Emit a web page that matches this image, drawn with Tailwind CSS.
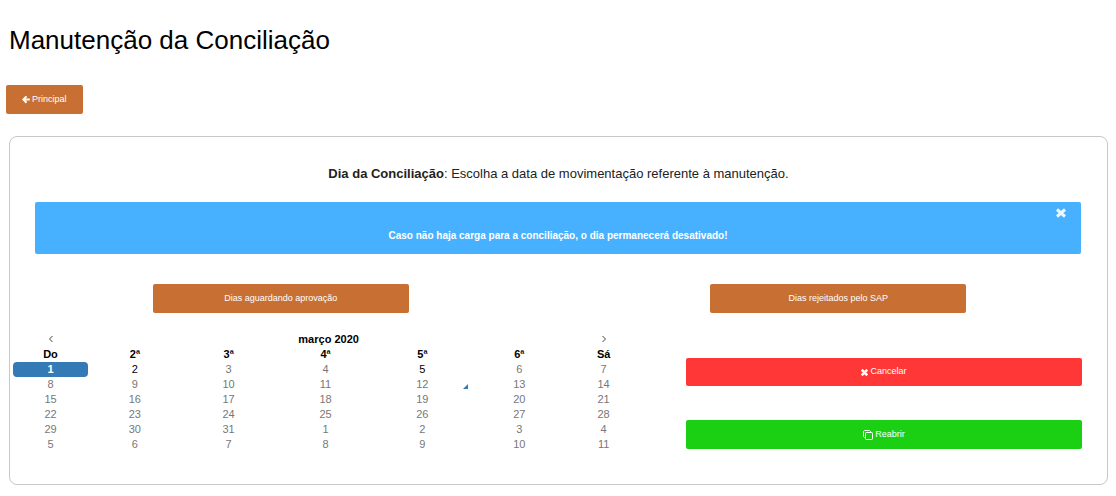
<!DOCTYPE html>
<html lang="pt-BR">
<head>
<meta charset="utf-8">
<meta name="viewport" content="width=device-width, initial-scale=1">
<title>Manutenção da Conciliação</title>
<script src="https://cdn.jsdelivr.net/npm/@tailwindcss/browser@4"></script>
</head>
<body class="bg-white font-['Liberation_Sans',Arial,sans-serif] text-black">
<main class="flex flex-col items-stretch pt-6 pr-2 pb-2">
  <h1 class="ml-[9px] text-[26px] leading-8">Manutenção da Conciliação</h1>
  <a href="#" class="mt-[29px] ml-1.5 flex h-[29px] items-center gap-0.5 self-start rounded-xs bg-[#c87033] px-4 text-[9px] text-white">
    <svg class="size-2" viewBox="0 0 16 16" fill="none" stroke="currentColor" stroke-width="3.6" aria-hidden="true"><path d="M15.5 7H3M9 .5L2.500 7L9 13.500"/></svg>
    Principal
  </a>
  <section class="mt-[22px] ml-[9px] rounded-lg border border-[#c8c8c8] pb-8">
    <p class="mt-7 text-center text-[13px] leading-[18px] text-[#222]"><strong>Dia da Conciliação</strong>: Escolha a data de movimentação referente à manutenção.</p>
    <div role="alert" class="relative mt-[19px] mr-[26px] ml-[25px] h-[52px] rounded-xs bg-[#47b1ff] pt-[26px] text-center text-[10px] leading-4 font-bold text-white">
      Caso não haja carga para a conciliação, o dia permanecerá desativado!
      <button type="button" aria-label="Fechar" class="absolute top-1.5 right-[15px] text-white/90">
        <svg class="size-2.5" viewBox="0 0 10 10" stroke="currentColor" stroke-width="3" aria-hidden="true"><path d="M1 1.500L9 8.500M9 1.500L1 8.500"/></svg>
      </button>
    </div>
    <div class="-mr-2.5 -ml-2 mt-[30px] grid grid-cols-2 justify-items-center text-[9px] text-white">
      <button type="button" class="h-[29px] w-[46%] rounded-xs bg-[#c87033]">Dias aguardando aprovação</button>
      <button type="button" class="h-[29px] w-[46%] rounded-xs bg-[#c87033]">Dias rejeitados pelo SAP</button>
    </div>
    <div class="mt-[19px] flex gap-12 pr-[25px] pl-[3px]">
      <table class="min-w-0 flex-[625] table-fixed border-separate border-spacing-0 text-center text-[11px] leading-[15px] text-[#777]">
        <colgroup><col class="w-[12%]"><col class="w-[15%]"><col class="w-[15%]"><col class="w-[16%]"><col class="w-[15%]"><col class="w-[16%]"><col class="w-[11%]"></colgroup>
        <thead class="text-black">
          <tr><th class="p-0"><button type="button" aria-label="Mês anterior" class="block w-full"><svg class="mx-auto h-[15px] w-1.5" viewBox="0 0 6 15" fill="none" stroke="#444" aria-hidden="true"><path d="M4.500 4L1.500 7L4.500 10"/></svg></button></th><th colspan="5" class="p-0">março 2020</th><th class="p-0"><button type="button" aria-label="Próximo mês" class="block w-full"><svg class="mx-auto h-[15px] w-1.5" viewBox="0 0 6 15" fill="none" stroke="#444" aria-hidden="true"><path d="M1.500 4L4.500 7L1.500 10"/></svg></button></th></tr>
          <tr><th class="p-0">Do</th><th class="p-0">2ª</th><th class="p-0">3ª</th><th class="p-0">4ª</th><th class="p-0">5ª</th><th class="p-0">6ª</th><th class="p-0">Sá</th></tr>
        </thead>
        <tbody>
          <tr><td class="rounded-sm bg-[#337ab7] p-0 text-white"><button type="button" class="w-full font-bold">1</button></td><td class="p-0 text-black"><button type="button" class="w-full">2</button></td><td class="p-0">3</td><td class="p-0">4</td><td class="p-0 text-black"><button type="button" class="w-full">5</button></td><td class="p-0">6</td><td class="p-0">7</td></tr>
          <tr><td class="p-0">8</td><td class="p-0">9</td><td class="p-0">10</td><td class="p-0">11</td><td class="relative p-0">12<svg class="absolute right-px bottom-[3px] size-[5px]" viewBox="0 0 5 5" fill="#337ab7" aria-hidden="true"><path d="M5 0V5H0Z"/></svg></td><td class="p-0">13</td><td class="p-0">14</td></tr>
          <tr><td class="p-0">15</td><td class="p-0">16</td><td class="p-0">17</td><td class="p-0">18</td><td class="p-0">19</td><td class="p-0">20</td><td class="p-0">21</td></tr>
          <tr><td class="p-0">22</td><td class="p-0">23</td><td class="p-0">24</td><td class="p-0">25</td><td class="p-0">26</td><td class="p-0">27</td><td class="p-0">28</td></tr>
          <tr><td class="p-0">29</td><td class="p-0">30</td><td class="p-0">31</td><td class="p-0">1</td><td class="p-0">2</td><td class="p-0">3</td><td class="p-0">4</td></tr>
          <tr><td class="p-0">5</td><td class="p-0">6</td><td class="p-0">7</td><td class="p-0">8</td><td class="p-0">9</td><td class="p-0">10</td><td class="p-0">11</td></tr>
        </tbody>
      </table>
      <div class="flex flex-[396] flex-col gap-[34px] pt-[26px] text-[9px] text-white">
        <button type="button" class="flex h-7 items-center justify-center gap-0.5 rounded-xs bg-[#ff3737]">
          <svg class="size-[7px]" viewBox="0 0 10 10" stroke="currentColor" stroke-width="3.600" aria-hidden="true"><path d="M1 1L9 9M9 1L1 9"/></svg>
          Cancelar
        </button>
        <button type="button" class="flex h-[29px] items-center justify-center gap-0.5 rounded-xs bg-[#1bd012]">
          <svg class="size-2.5" viewBox="0 0 10 10" fill="none" stroke="currentColor" aria-hidden="true"><path d="M2.500 7.500H1.500L.5 6.500V1.500L1.500 .5H6.500L7.500 1.500V2.500"/><rect x="2.500" y="2.500" width="7" height="7" rx=".8"/></svg>
          Reabrir
        </button>
      </div>
    </div>
  </section>
</main>
</body>
</html>
